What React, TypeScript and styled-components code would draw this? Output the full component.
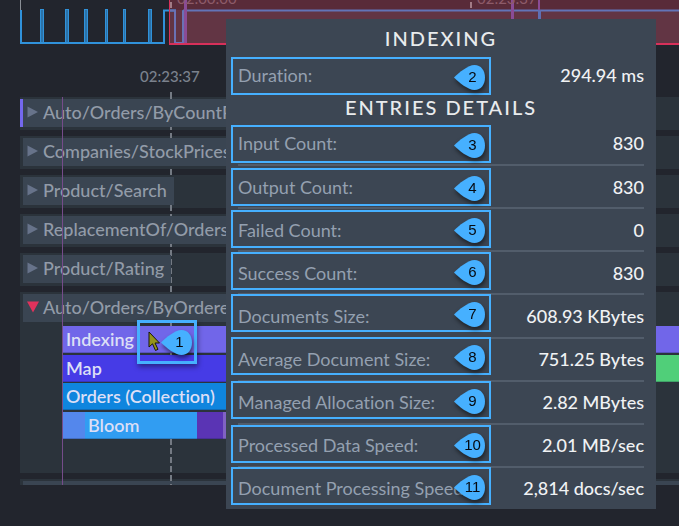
import React from "react";
import styled, { createGlobalStyle } from "styled-components";

const GlobalStyle = createGlobalStyle`
  * { box-sizing: border-box; }
  body {
    margin: 0;
    background: #22252d;
    font-family: Lato, "Open Sans", sans-serif;
    font-variant-ligatures: none;
  }
`;

const Page = styled.main`
  position: relative;
  min-height: 100vh;
  padding-left: 20px;
  overflow: hidden;
  background: #22252d;
`;

const Overview = styled.svg`
  display: block;
  width: 100%;
  height: 45px;
`;

const Axis = styled.div`
  position: relative;
  display: flex;
  align-items: center;
  height: 52px;
  padding: 10px 0 0 120px;
  font-size: 15px;
  line-height: 20px;
  font-weight: 500;
  color: #7b828d;

  &::after {
    content: "";
    position: absolute;
    bottom: 0;
    left: 150px;
    width: 2px;
    height: 5px;
    background: #747a83;
  }
`;

const Tracks = styled.section`
  position: relative;
  display: flex;
  flex-direction: column;
  gap: 6px;
  max-height: 388px;
  overflow: hidden;
`;

const Track = styled.div<{ $expanded?: boolean }>`
  flex: none;
  padding: 2px 0 ${(p) => (p.$expanded ? 34 : 3)}px 3px;
  background: #2b333b;
`;

const TrackButton = styled.button<{ $marked?: boolean }>`
  position: relative;
  z-index: 2;
  display: flex;
  align-items: center;
  gap: 4px;
  height: 28px;
  padding: 0 7px 2px 4px;
  border: 0;
  background: #3a4552;
  box-shadow: ${(p) => (p.$marked ? "-3px 0 0 #7468ee" : "none")};
  font: 500 18px/26px Lato, sans-serif;
  font-variant-ligatures: none;
  color: #929ba8;
  white-space: nowrap;
`;

const TrackHeader = styled.div`
  height: 28px;
  background: #3a4552;
`;

const Arrow = styled.svg`
  display: block;
  flex: none;
  width: 12px;
  height: 12px;
`;

const Bars = styled.div`
  position: relative;
  z-index: 2;
  display: flex;
  flex-direction: column;
  justify-content: space-between;
  min-height: 113px;
  margin: 4px 0 0 40px;
`;

const BarRow = styled.div`
  display: flex;
  height: 27px;
`;

const Bar = styled.div<{ $color: string; $width?: number }>`
  flex: ${(p) => (p.$width ? `0 0 ${p.$width}px` : "1")};
  padding-left: 3px;
  background: ${(p) => p.$color};
  box-shadow: inset 0 -1px 0 rgba(20, 30, 60, 0.25);
  font-size: 18px;
  line-height: 27px;
  font-weight: 600;
  color: #dcdff6;
  white-space: nowrap;
`;

const TimeGuide = styled.div`
  position: absolute;
  z-index: 1;
  top: 0;
  bottom: 0;
  left: 150px;
  width: 2px;
  background: repeating-linear-gradient(#747a83 0 6px, transparent 6px 9px);
`;

const StartGuide = styled.div`
  position: absolute;
  z-index: 3;
  top: 0;
  bottom: 0;
  left: 42px;
  width: 1px;
  background: #754c8a;
`;

const Tooltip = styled.aside`
  position: absolute;
  z-index: 4;
  top: 19px;
  left: 226px;
  width: 430px;
  min-height: 490px;
  display: flex;
  flex-direction: column;
  padding: 7px 12px 0;
  background: #3c4653;
`;

const Title = styled.h2`
  margin: 0;
  font-size: 20px;
  line-height: 24px;
  font-weight: 500;
  letter-spacing: 2px;
  text-align: center;
  text-transform: uppercase;
  color: #e9ebed;
`;

const Details = styled.dl<{ $grow?: boolean }>`
  flex: ${(p) => (p.$grow ? "1" : "none")};
  display: grid;
  grid-auto-rows: ${(p) => (p.$grow ? "1fr" : "41px")};
  margin: ${(p) => (p.$grow ? 2 : 4)}px 0 0;
`;

const Detail = styled.div`
  display: flex;
  align-items: center;
  justify-content: space-between;
  font-size: 18px;
  line-height: 24px;
  white-space: nowrap;

  & + & {
    border-top: 2px solid #525d6b;
  }
`;

const Label = styled.dt`
  color: #94a0b0;
`;

const Value = styled.dd`
  margin: 0;
  font-weight: 500;
  color: #f0f2f4;
`;

const Callout = styled.div<{ $top: number }>`
  position: absolute;
  top: ${(p) => p.$top}px;
  left: 5px;
  width: 260px;
  height: 38px;
  display: flex;
  align-items: center;
  justify-content: flex-end;
  padding: 2px 4px 0 0;
  border: 2px solid #46b0ff;
`;

const CursorCallout = styled.div`
  position: absolute;
  z-index: 4;
  top: 320px;
  left: 137px;
  width: 60px;
  height: 44px;
  display: flex;
  align-items: center;
  justify-content: space-between;
  padding: 0 2px 0 8px;
  border: 3px solid #46b0ff;
  box-shadow: 1px 3px 5px rgba(0, 0, 0, 0.4);
`;

const PinBox = styled.span`
  display: grid;
  place-items: center;
  width: 31px;
  height: 25px;
  filter: drop-shadow(1px 3px 2px rgba(0, 0, 0, 0.5));

  > * {
    grid-area: 1 / 1;
  }
`;

const PinNumber = styled.span`
  padding-left: 6px;
  font: 400 15px/24px "Liberation Sans", Arial, sans-serif;
  color: #060a10;
`;

function Pin({ n }: { n: number }) {
  return (
    <PinBox>
      <svg width="31" height="25" viewBox="0 0 31 25" aria-hidden="true">
        <path
          d="M0 12.5C5 7.5 14 0 20.500 0C27 0 31 5.5 31 12.5C31 19.500 27 25 20.500 25C14 25 5 17.500 0 12.500Z"
          fill="#46b0ff"
        />
      </svg>
      <PinNumber>{n}</PinNumber>
    </PinBox>
  );
}

const tracks = [
  "Auto/Orders/ByCountP",
  "Companies/StockPrices",
  "Product/Search",
  "ReplacementOf/Orders",
  "Product/Rating",
];

const entries: [string, string][] = [
  ["Input Count:", "830"],
  ["Output Count:", "830"],
  ["Failed Count:", "0"],
  ["Success Count:", "830"],
  ["Documents Size:", "608.93 KBytes"],
  ["Average Document Size:", "751.25 Bytes"],
  ["Managed Allocation Size:", "2.82 MBytes"],
  ["Processed Data Speed:", "2.01 MB/sec"],
  ["Document Processing Speed:", "2,814 docs/sec"],
];

const callouts = [38, 106, 149, 191, 233, 275, 318, 362, 406, 448];

const pulses = [
  [20, 4],
  [45, 4],
  [64, 4],
  [85, 3],
  [103, 3],
  [128, 4],
];

function OverviewChart() {
  return (
    <Overview aria-label="Activity overview" role="img">
      <rect x="0" y="0" width="1" height="10" fill="#8a8f96" />
      <rect x="149" y="0" width="100%" height="10" fill="#592b39" />
      <rect x="149" y="10" width="100%" height="34" fill="#623544" />
      <g fill="#2b72a8" stroke="#3092da">
        {pulses.map(([x, w]) => (
          <rect key={x} x={x + 0.5} y="9.500" width={w - 1} height="34" />
        ))}
      </g>
      <path d="M1 10V43H144V10.500H155V43H163V10.500" fill="none" stroke="#3092da" strokeWidth="2" />
      <path d="M149 10.500H155V43H163V10.500" fill="none" stroke="#6a72b5" strokeWidth="2" />
      <rect x="163" y="9.500" width="100%" height="2" fill="#6274b8" />
      <rect x="164" y="0" width="3" height="43" fill="#8a4c96" />
      <rect x="491" y="0" width="3" height="43" fill="#8a4c96" />
      <rect x="518" y="0" width="2" height="10" fill="#8a4c96" />
      <rect x="518" y="10" width="3" height="33" fill="#5f6fb2" />
      <rect x="150" y="2" width="2" height="6" fill="#a27b86" />
      <rect x="450" y="2" width="2" height="6" fill="#a27b86" />
      <g fill="#8d5b69" fontSize="15" fontFamily="Lato">
        <text x="157" y="4">02:00:00</text>
        <text x="457" y="4">02:23:37</text>
      </g>
      <rect x="149" y="0" width="1" height="45" fill="#d8305a" />
      <rect x="149" y="43" width="100%" height="2" fill="#d8305a" />
    </Overview>
  );
}

export default function App() {
  return (
    <Page>
      <GlobalStyle />
      <OverviewChart />
      <Axis>02:23:37</Axis>
      <Tracks>
        {tracks.map((name, i) => (
          <Track key={name}>
            <TrackButton type="button" aria-expanded="false" $marked={i === 0}>
              <Arrow viewBox="0 0 12 12">
                <path d="M0.500 0.500L11 6L0.500 11.500Z" fill="#67738a" />
              </Arrow>
              {name}
            </TrackButton>
          </Track>
        ))}
        <Track $expanded>
          <TrackButton type="button" aria-expanded="true">
            <Arrow viewBox="0 0 12 12">
              <path d="M0 0.500H12L6 11.500Z" fill="#e0325c" />
            </Arrow>
            Auto/Orders/ByOrdere
          </TrackButton>
          <Bars>
            <BarRow>
              <Bar $color="#7166e9">Indexing</Bar>
            </BarRow>
            <BarRow>
              <Bar $color="#463be6" $width={400}>Map</Bar>
              <Bar $color="#50cf79" />
            </BarRow>
            <BarRow>
              <Bar $color="#0f85de" $width={400}>Orders (Collection)</Bar>
            </BarRow>
            <BarRow>
              <Bar $color="#5487ec" $width={22} />
              <Bar $color="#319df2" $width={112}>Bloom</Bar>
              <Bar $color="#5a34b4" $width={26} />
              <Bar $color="#8062c4" $width={200} />
            </BarRow>
          </Bars>
        </Track>
        <Track>
          <TrackHeader />
        </Track>
        <TimeGuide />
        <StartGuide />
      </Tracks>

      <CursorCallout>
        <svg width="12" height="22" viewBox="0 0 12 22" aria-hidden="true">
          <path
            d="M1 1V16L4.500 12.800L7.500 19.500L10 18.300L7 12H11.500Z"
            fill="#94941a"
            stroke="#16160a"
            strokeWidth="1"
          />
        </svg>
        <Pin n={1} />
      </CursorCallout>

      <Tooltip role="tooltip">
        <Title>Indexing</Title>
        <Details>
          <Detail>
            <Label>Duration:</Label>
            <Value>294.94 ms</Value>
          </Detail>
        </Details>
        <Title>Entries details</Title>
        <Details $grow>
          {entries.map(([label, value]) => (
            <Detail key={label}>
              <Label>{label}</Label>
              <Value>{value}</Value>
            </Detail>
          ))}
        </Details>
        {callouts.map((top, i) => (
          <Callout key={top} $top={top}>
            <Pin n={i + 2} />
          </Callout>
        ))}
      </Tooltip>
    </Page>
  );
}
